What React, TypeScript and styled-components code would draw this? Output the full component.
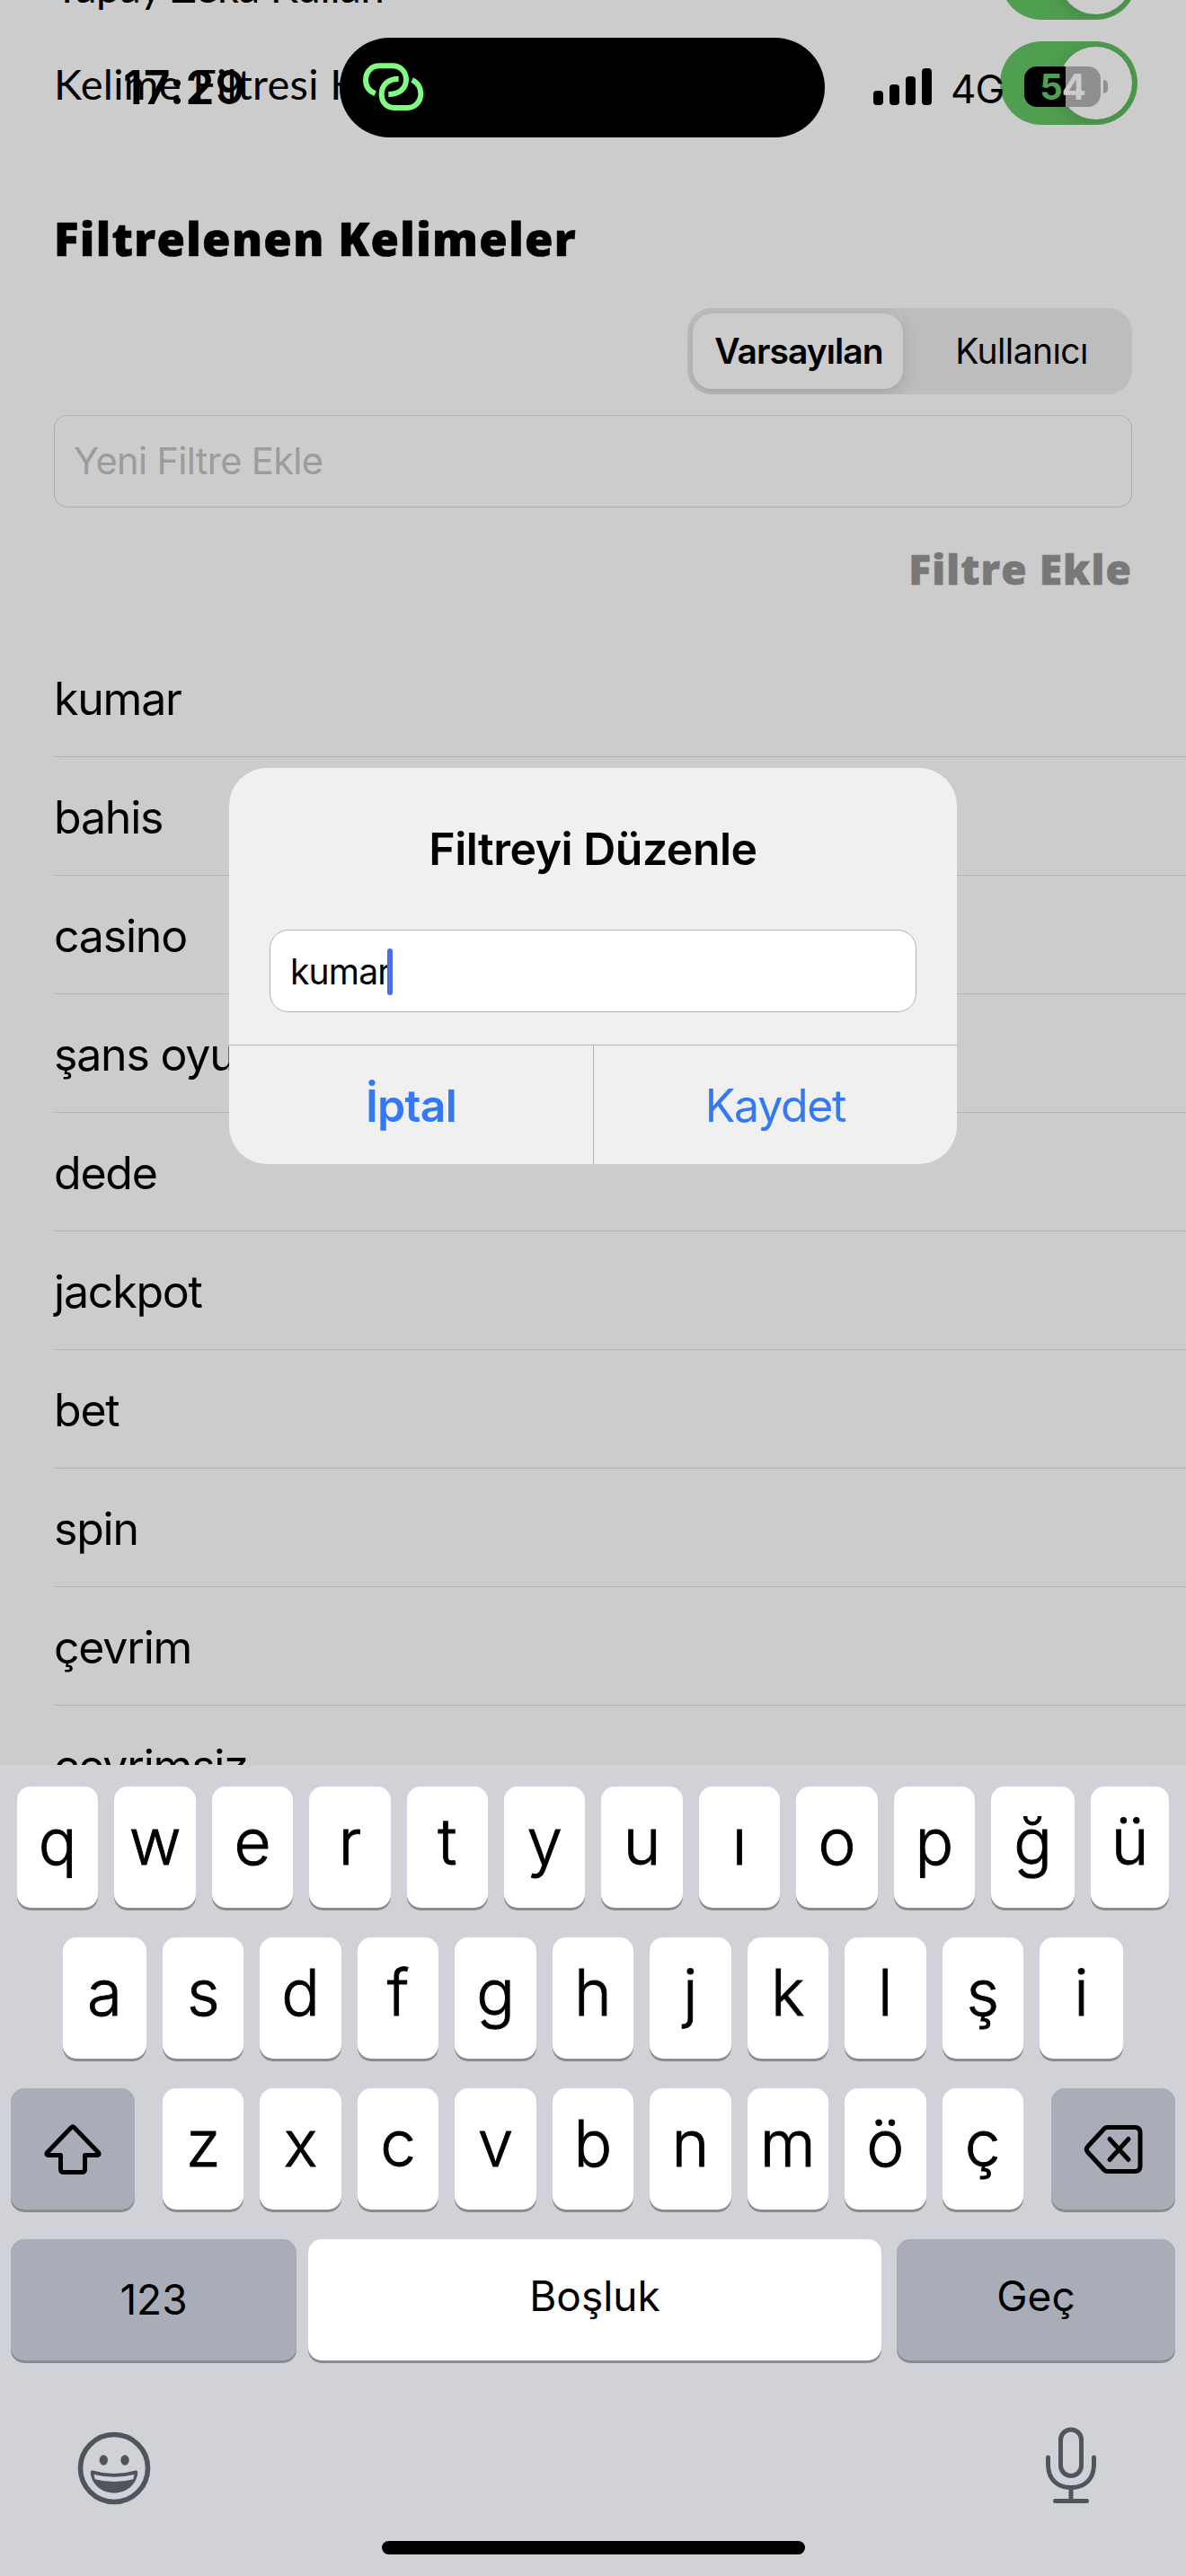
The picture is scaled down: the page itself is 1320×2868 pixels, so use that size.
import React from "react";
import styled, { createGlobalStyle } from "styled-components";

const GlobalStyle = createGlobalStyle`
  *, *::before, *::after { box-sizing: border-box; }
  body { margin: 0; background: #cccccc; }
  button { appearance: none; border: 0; margin: 0; padding: 0; background: none; font: inherit; color: inherit; }
`;

const ui = `Inter, "Noto Sans", "Liberation Sans", sans-serif`;
const brand = `Lato, "Open Sans", sans-serif`;
const brandHeavy = `"Open Sans", Lato, sans-serif`;

const Screen = styled.main`
  position: relative;
  display: flow-root;
  width: 1320px;
  height: 2868px;
  overflow: hidden;
  background: #cccccc;
  color: #000;
  font-family: ${ui};
  white-space: nowrap;
`;

/* Settings page, scrolled under the status bar */

const Settings = styled.div`
  display: flex;
  flex-direction: column;
  margin-top: -83px;
`;

const SettingRow = styled.div`
  display: flex;
  align-items: center;
  justify-content: space-between;
  height: 117px;
  padding: 0 54px 0 60px;
`;

const SettingLabel = styled.span<{ $drop?: number; $spacing?: number }>`
  padding-top: ${(p) => p.$drop ?? 0}px;
  font: 400 47px/60px ${brand};
  letter-spacing: ${(p) => p.$spacing ?? 0}px;
`;

const Toggle = styled.span`
  display: flex;
  justify-content: flex-end;
  width: 153px;
  height: 93px;
  padding: 6px;
  border-radius: 47px;
  background: #509e50;
  overflow: hidden;
`;

const Thumb = styled.span`
  width: 81px;
  height: 81px;
  border-radius: 50%;
  background: #cccccc;
  box-shadow: 0 4px 22px rgba(0, 0, 0, 0.16);
`;

const FilterSection = styled.section`
  display: flex;
  flex-direction: column;
  margin-top: 84px;
  padding: 0 60px;
`;

const Heading = styled.h1`
  margin: 0;
  font: 800 51px/60px ${brandHeavy};
  letter-spacing: 1.3px;
  -webkit-text-stroke: 0.6px currentColor;
`;

const Segmented = styled.div`
  align-self: flex-end;
  display: grid;
  grid-template-columns: 234px 1fr;
  gap: 9px;
  width: 495px;
  height: 96px;
  margin-top: 48px;
  padding: 6px;
  border-radius: 27px;
  background: #bdbdbe;
  overflow: hidden;
`;

const Segment = styled.button<{ $active?: boolean }>`
  height: 84px;
  padding-left: ${(p) => (p.$active ? 2 : 6)}px;
  border-radius: 21px;
  background: ${(p) => (p.$active ? "#cccccc" : "transparent")};
  box-shadow: ${(p) => (p.$active ? "0 6px 20px rgba(0,0,0,0.12), 0 1px 3px rgba(0,0,0,0.05)" : "none")};
  font: ${(p) => (p.$active ? 600 : 400)} 39px/84px ${ui};
  letter-spacing: ${(p) => (p.$active ? -0.95 : -0.6)}px;
`;

const FilterField = styled.div`
  height: 103px;
  margin-top: 23px;
  padding-left: 21px;
  border: 1px solid #adadad;
  border-top-color: #b4b4b4;
  border-radius: 15px;
  color: #9c9c9d;
  font: 400 41.5px/101px ${ui};
  letter-spacing: -0.6px;
`;

const AddButton = styled.button`
  align-self: flex-end;
  margin-top: 38px;
  color: #787878;
  font: 800 46px/60px ${brandHeavy};
  letter-spacing: 1.1px;
  -webkit-text-stroke: 0.6px currentColor;
`;

const WordList = styled.ul`
  margin: 48px 0 0;
  padding: 0 0 0 60px;
  list-style: none;
`;

const Word = styled.li`
  height: 132px;
  border-bottom: 1px solid #b3b3b3;
  font: 400 50px/135px ${ui};
  letter-spacing: -1.2px;
`;

/* Status bar */

const StatusBar = styled.header`
  position: absolute;
  inset: 0 0 auto 0;
  height: 194px;
  display: flex;
  align-items: flex-start;
`;

const Clock = styled.time`
  width: 378px;
  padding: 68px 0 0 137px;
  font: 600 52px/60px ${ui};
  letter-spacing: 0.8px;
`;

const Island = styled.div`
  width: 540px;
  height: 111px;
  margin-top: 42px;
  padding: 8px 12px;
  border-radius: 56px;
  background: #000;
`;

const Signals = styled.div`
  display: flex;
  align-items: center;
  height: 60px;
  margin: 66px 0 0 54px;
`;

const SignalBars = styled.div`
  display: flex;
  align-items: flex-end;
  gap: 7px;
  height: 41px;
`;

const Bar = styled.i<{ $h: number }>`
  width: 11px;
  height: ${(p) => p.$h}px;
  border-radius: 4px;
  background: #000;
`;

const Network = styled.span`
  width: 81px;
  margin-top: 6px;
  padding-left: 21px;
  font: 400 44px/60px ${ui};
  letter-spacing: -1px;
`;

const Battery = styled.span`
  display: flex;
  justify-content: center;
  width: 85px;
  height: 45px;
  margin: 1px 0 0 22px;
  border-radius: 14px;
  background: linear-gradient(90deg, #000 46px, #8f8f8f 46px);
  color: #cccccc;
  font: 700 40px/45px ${ui};
  letter-spacing: -1px;
`;

const Charged = styled.span`
  color: #509e50;
`;

const BatteryCap = styled.i`
  width: 5px;
  height: 15px;
  margin-left: 3px;
  border-radius: 0 5px 5px 0;
  background: #8f8f8f;
`;

/* Alert */

const Alert = styled.div`
  position: absolute;
  left: 255px;
  top: 855px;
  display: flex;
  flex-direction: column;
  width: 810px;
  height: 441px;
  border-radius: 42px;
  background: #f0f0f0;
  overflow: hidden;
`;

const AlertTitle = styled.h2`
  margin: 60px 0 0;
  text-align: center;
  font: 600 50px/60px ${ui};
  letter-spacing: -0.5px;
`;

const AlertField = styled.div`
  display: flex;
  align-items: center;
  height: 92px;
  margin: 60px 45px 36px;
  padding: 2px 0 0 22px;
  border: 1px solid #b3b3b3;
  border-radius: 21px;
  background: #fff;
  font: 400 39px/60px ${ui};
  letter-spacing: -0.8px;
`;

const Caret = styled.i`
  width: 6px;
  height: 52px;
  margin-left: -3px;
  border-radius: 3px;
  background: #4b6de8;
`;

const AlertActions = styled.div`
  flex: 1;
  display: grid;
  grid-template-columns: 405px 1fr;
  border-top: 1px solid #b3b3b3;
`;

const AlertAction = styled.button<{ $strong?: boolean }>`
  border-left: ${(p) => (p.$strong ? "0" : "1px solid #b3b3b3")};
  padding-top: 2px;
  color: #3478f6;
  font: ${(p) => (p.$strong ? 600 : 400)} 50px/60px ${ui};
  letter-spacing: ${(p) => (p.$strong ? -0.7 : -1.3)}px;
`;

/* Keyboard */

const Keyboard = styled.div`
  position: absolute;
  inset: auto 0 0 0;
  height: 903px;
  padding-top: 24px;
  display: flex;
  flex-direction: column;
  gap: 33px;
  background: #d1d2d8;
`;

const KeyRow = styled.div<{ $left: number; $right: number; $gap?: number }>`
  display: flex;
  gap: ${(p) => p.$gap ?? 18}px;
  padding: 0 ${(p) => p.$right}px 0 ${(p) => p.$left}px;
`;

const Key = styled.button<{ $w?: number }>`
  flex: ${(p) => (p.$w ? `0 0 ${p.$w}px` : "1 1 0")};
  min-width: 0;
  height: 135px;
  padding-bottom: 13px;
  border-radius: 15px;
  background: #fff;
  box-shadow: 0 3px 0 #8a8b8f;
  text-align: center;
  font: 300 71px/122px ${ui};
  -webkit-text-stroke: 0.9px currentColor;
`;

const LetterGroup = styled.div`
  flex: 1;
  display: flex;
  gap: 18px;
`;

const WideKey = styled(Key)<{ $dark?: boolean; $lift?: number; $after?: number }>`
  display: flex;
  align-items: center;
  justify-content: center;
  margin-right: ${(p) => p.$after ?? 0}px;
  padding-bottom: ${(p) => p.$lift ?? 0}px;
  background: ${(p) => (p.$dark ? "#a9adb8" : "#fff")};
  font: 400 46px/60px ${ui};
  -webkit-text-stroke: 0;
`;

const Dock = styled.div`
  display: flex;
  align-items: center;
  justify-content: space-between;
  height: 90px;
  margin-top: 42px;
  padding: 0 97px 0 85px;
`;

const HomeIndicator = styled.div`
  align-self: center;
  width: 471px;
  height: 15px;
  margin-top: 3px;
  border-radius: 8px;
  background: #000;
`;

const Icon = styled.svg`
  display: block;
`;

const LinkIcon = () => (
  <Icon width="96" height="92" viewBox="0 0 288 276" fill="none" stroke="#80fc81" strokeWidth="18">
    <path d="M83 163C62 154 51 138 51 118C51 90 70 70 97 70H140C168 70 186 90 186 116C186 146 162 165 127 165" />
    <path d="M206 117C225 126 235 143 235 163C235 190 216 210 190 210H146C119 210 104 190 104 164C104 134 126 113 161 113" />
  </Icon>
);

const ShiftIcon = () => (
  <Icon width="70" height="62" viewBox="0 0 70 62" fill="none" stroke="#000" strokeWidth="5" strokeLinejoin="round">
    <path d="M33.500 6.600Q35 5 36.500 6.600L63.500 34.500Q65.200 37 62.500 37.500H48.500V53Q48.500 56.500 45 56.500H25Q21.500 56.500 21.500 53V37.500H7.500Q4.800 37 6.500 34.500Z" />
  </Icon>
);

const BackspaceIcon = () => (
  <Icon width="70" height="60" viewBox="0 0 70 60" fill="none" stroke="#000" strokeWidth="5" strokeLinecap="round" strokeLinejoin="round">
    <path d="M28.500 5.500H59Q65 5.500 65 11.500V48.500Q65 54.500 59 54.500H28.500Q26.500 54.500 25 53L6.500 33Q4 30 6.500 27L25 7Q26.500 5.500 28.500 5.500Z" />
    <path d="M31 18.500L52 41.500M52 18.500L31 41.500" />
  </Icon>
);

const EmojiIcon = () => (
  <Icon width="84" height="84" viewBox="0 0 84 84" fill="none">
    <circle cx="42" cy="42" r="37.500" stroke="#50555c" strokeWidth="5.600" />
    <ellipse cx="30.300" cy="33" rx="4.700" ry="5.700" fill="#50555c" />
    <ellipse cx="54" cy="33" rx="4.700" ry="5.700" fill="#50555c" />
    <path d="M18 44.500Q42 51.500 66 44.500Q68.500 44 68.300 47C67 60 56 69.500 42 69.500S17 60 15.700 47Q15.500 44 18 44.500Z" fill="#50555c" />
    <path d="M19.500 49Q42 54.500 64.500 49L63.300 54.200Q42 60 20.700 54.200Z" fill="#d1d2d8" />
  </Icon>
);

const MicIcon = () => (
  <Icon width="62" height="94" viewBox="0 0 62 94" fill="none" stroke="#50555c" strokeWidth="5" strokeLinecap="round">
    <rect x="19.500" y="4" width="23" height="51.500" rx="11.500" />
    <path d="M5.500 35V43C5.500 59 15.500 68.500 31 68.500S56.500 59 56.500 43V35M31 68.500V83.500M13.500 83.500H48.500" />
  </Icon>
);

const words = ["kumar", "bahis", "casino", "şans oyunları", "dede", "jackpot", "bet", "spin", "çevrim", "çevrimsiz"];
const topKeys = [..."qwertyuıopğü"];
const homeKeys = [..."asdfghjklşi"];
const bottomKeys = [..."zxcvbnmöç"];

const keyWidths: Record<string, number> = { ğ: 93, ü: 87, a: 93, i: 93 };

export default function App() {
  return (
    <Screen>
      <GlobalStyle />
      <Settings>
        <SettingRow>
          <SettingLabel $drop={19} $spacing={-0.2}>Yapay Zeka Kullan</SettingLabel>
          <Toggle><Thumb /></Toggle>
        </SettingRow>
        <SettingRow>
          <SettingLabel $spacing={0.3}>Kelime Filtresi Kullan</SettingLabel>
          <Toggle><Thumb /></Toggle>
        </SettingRow>
        <FilterSection>
          <Heading>Filtrelenen Kelimeler</Heading>
          <Segmented>
            <Segment $active>Varsayılan</Segment>
            <Segment>Kullanıcı</Segment>
          </Segmented>
          <FilterField>Yeni Filtre Ekle</FilterField>
          <AddButton>Filtre Ekle</AddButton>
        </FilterSection>
        <WordList>
          {words.map((w) => <Word key={w}>{w}</Word>)}
        </WordList>
      </Settings>

      <StatusBar>
        <Clock>17:29</Clock>
        <Island><LinkIcon /></Island>
        <Signals>
          <SignalBars>
            {[16, 23, 32, 41].map((h) => <Bar key={h} $h={h} />)}
          </SignalBars>
          <Network>4G</Network>
          <Battery><Charged>5</Charged>4</Battery>
          <BatteryCap />
        </Signals>
      </StatusBar>

      <Alert>
        <AlertTitle>Filtreyi Düzenle</AlertTitle>
        <AlertField>kumar<Caret /></AlertField>
        <AlertActions>
          <AlertAction $strong>İptal</AlertAction>
          <AlertAction>Kaydet</AlertAction>
        </AlertActions>
      </Alert>

      <Keyboard>
        <KeyRow $left={19} $right={19}>
          {topKeys.map((k) => <Key key={k} $w={keyWidths[k]}>{k}</Key>)}
        </KeyRow>
        <KeyRow $left={70} $right={70}>
          {homeKeys.map((k) => <Key key={k} $w={keyWidths[k]}>{k}</Key>)}
        </KeyRow>
        <KeyRow $left={12} $right={12} $gap={31}>
          <WideKey $w={138} $dark><ShiftIcon /></WideKey>
          <LetterGroup>
            {bottomKeys.map((k) => <Key key={k}>{k}</Key>)}
          </LetterGroup>
          <WideKey $w={138} $dark><BackspaceIcon /></WideKey>
        </KeyRow>
        <KeyRow $left={12} $right={12} $gap={13}>
          <WideKey $w={318} $dark $lift={1}>123</WideKey>
          <WideKey $w={638} $lift={9} $after={4}>Boşluk</WideKey>
          <WideKey $dark $lift={9}>Geç</WideKey>
        </KeyRow>
        <Dock>
          <EmojiIcon />
          <MicIcon />
        </Dock>
        <HomeIndicator />
      </Keyboard>
    </Screen>
  );
}
